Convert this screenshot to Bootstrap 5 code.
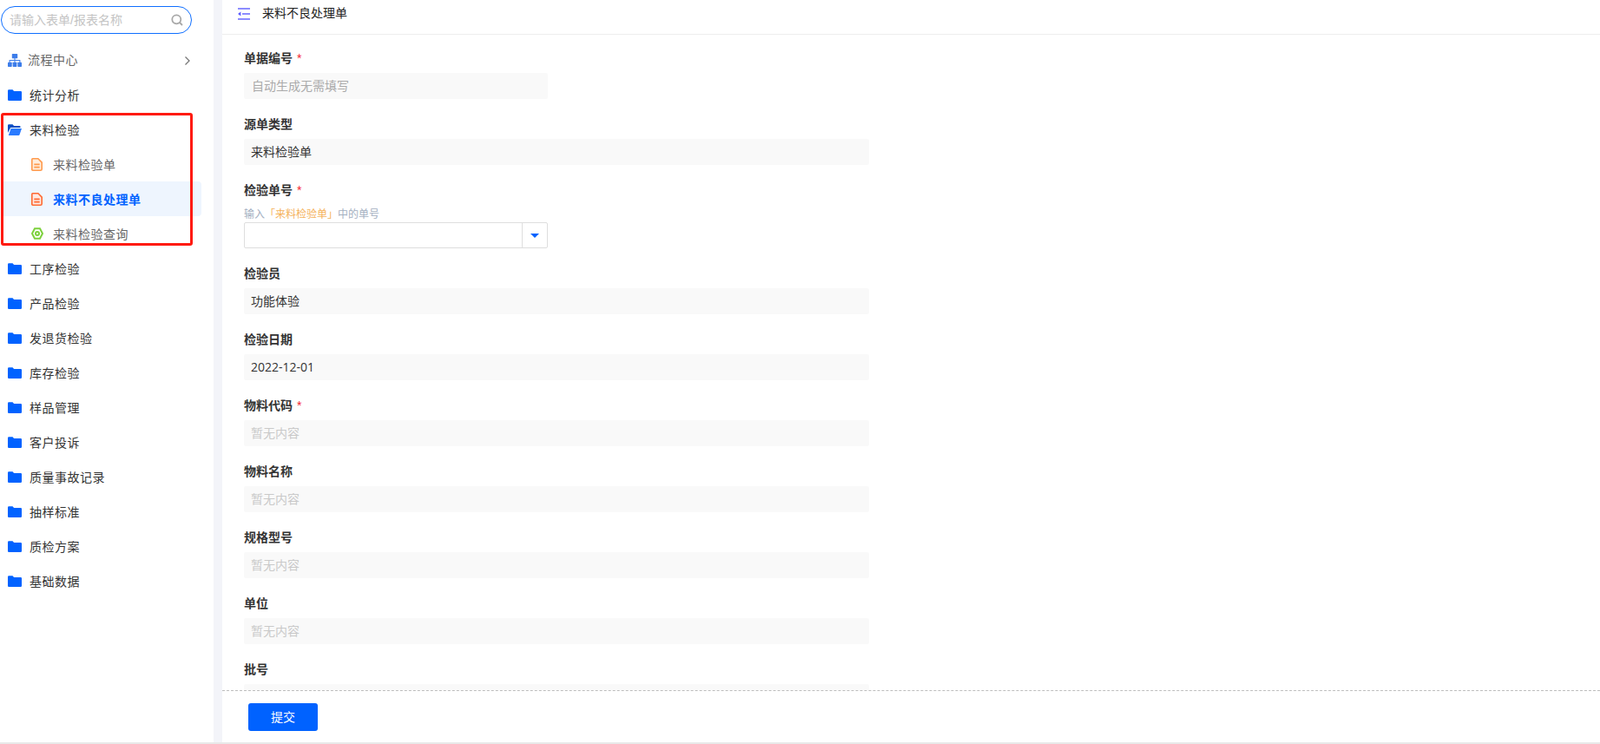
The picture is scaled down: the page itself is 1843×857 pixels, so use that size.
<!DOCTYPE html>
<html lang="zh-CN">

<head>
    <meta charset="UTF-8" />
    <title>来料不良处理单</title>
    <link rel="stylesheet" href="https://cdn.jsdelivr.net/npm/bootstrap@5.3.0/dist/css/bootstrap.min.css">
    <style>
        html, body { height: 100%; overflow: hidden; }
        body { font-family: "Liberation Sans", "Noto Sans CJK SC", sans-serif; font-size: 14px; color: #333; background: #fff; }
        .app-shell { height: 857px; border-bottom: 2px solid #e8e8e8; }
        .side-pane { width: 246px; flex: none; position: relative; }
        .side-gap { width: 10px; flex: none; background: #f3f4f9; }
        .search-box { margin: 7px 0 0 1px; width: 220px; height: 32px; border: 1px solid #0f6fff; border-radius: 16px; padding: 0 9px 0 9px; }
        .search-box span { color: #c4c4c4; font-size: 14px; }
        .menu-wrap { margin-top: 10px; }
        .menu-row { height: 40px; padding-left: 9px; color: #333; }
        .menu-row .row-ico { width: 16px; flex: none; margin-right: 9px; }
        .menu-row .row-text, .sub-row .row-text { padding-top: 2px; letter-spacing: .5px; }
        .menu-first { color: #666; }
        .menu-first .row-ico { margin-right: 7px; }
        .menu-first .row-text { padding-top: 0; }
        .menu-arrow { margin-right: 26px; }
        .sub-row { height: 40px; padding-left: 36px; color: #666; margin-right: 14px; }
        .sub-row .row-ico { width: 15px; flex: none; margin-right: 10px; }
        .sub-active { background: #eef5fe; color: #0062ff; font-weight: 700; border-radius: 0 4px 4px 0; margin-left: 3px; padding-left: 33px; }
        .red-frame { position: absolute; left: 1px; top: 130px; width: 221px; height: 153px; border: 3px solid #ff1a0e; border-radius: 3px; pointer-events: none; }
        .head-bar { height: 40px; border-bottom: 1px solid #eeeeee; padding-left: 18px; flex: none; color: #222; }
        .head-bar svg { margin-right: 14px; margin-top: -8px; }
        .head-bar span { margin-top: -8px; }
        .form-scroll { height: 755px; overflow: hidden; padding: 17px 0 0 25px; flex: none; position: relative; }
        .fld { height: 76px; }
        .fld-label { font-weight: 700; color: #333; line-height: 20px; height: 27px; margin: 0; padding: 0; }
        .fld-label i { color: #f5222d; font-style: normal; font-weight: 400; margin-left: 5px; }
        .fld-value { width: 720px; height: 30px; line-height: 30px; background: #f9f9f9; padding: 0 8px; border-radius: 2px; color: #333; }
        .fld-date { font-family: "Open Sans", "Noto Sans CJK SC", sans-serif; }
        .fld-short { width: 350px; padding-left: 9px; color: #aaa; }
        .fld-empty { color: #c9c9c9; }
        .fld-tall { height: 96px; }
        .fld-hint { font-size: 12px; line-height: 16px; height: 16px; color: #a3afbf; margin-top: 3px; }
        .fld-hint b { font-weight: 400; color: #f5b25a; }
        .pick-box { width: 350px; height: 30px; border: 1px solid #dedede; border-radius: 2px; margin-top: 1px; background: #fff; }
        .pick-box div { width: 29px; border-left: 1px solid #dedede; }
        .pick-arrow { width: 0; height: 0; border-left: 5px solid transparent; border-right: 5px solid transparent; border-top: 5px solid #0062ff; }
        .foot-bar { height: 60px; border-top: 1px dashed #bdbdbd; padding: 14px 0 0 30px; flex: none; }
        .btn-send { width: 80px; height: 32px; background: #0062ff; color: #fff; font-size: 14px; padding: 0; border: 0; border-radius: 3px; }
    </style>
</head>

<body>
    <div class="app-shell d-flex">
        <div class="side-pane">
            <div class="search-box d-flex align-items-center justify-content-between">
                <span>请输入表单/报表名称</span>
                <svg width="14" height="14" viewBox="0 0 14 14" fill="none" stroke="#a8a8a8" stroke-width="1.8"><circle cx="6.3" cy="6.3" r="5" /><path d="M10 10l3 3" /></svg>
            </div>
            <div class="menu-wrap" id="menu"></div>
            <div class="red-frame"></div>
        </div>
        <div class="side-gap"></div>
        <div class="flex-grow-1 d-flex flex-column">
            <div class="head-bar d-flex align-items-center">
                <svg width="14" height="14" viewBox="0 0 14 14" fill="none" stroke="#8c8cff" stroke-width="2"><path d="M0 1h14M5 7h9M0 13h14" /><path d="M3.4 4.6v4.8L0 7z" fill="#5a5aff" stroke="none" /></svg>
                <span>来料不良处理单</span>
            </div>
            <div class="form-scroll" id="form"></div>
            <div class="foot-bar"><button type="button" class="btn btn-send">提交</button></div>
        </div>
    </div>

    <script>
        const folder = `<svg width="16" height="13" viewBox="0 0 16 13"><path d="M0 1.5A1.2 1.2 0 0 1 1.2.3h4.3l1.6 1.6h7.7A1.2 1.2 0 0 1 16 3.1v8.6a1.2 1.2 0 0 1-1.2 1.2H1.2A1.2 1.2 0 0 1 0 11.7z" fill="#0062ff"/></svg>`;
        const folderOpen = `<svg width="16" height="13" viewBox="0 0 16 13"><path d="M0 1.5A1.2 1.2 0 0 1 1.2.3h4.3l1.6 1.6h6.4a1 1 0 0 1 1 1V4H3.2L0 10z" fill="#0a4fc4"/><path d="M3.6 5H16l-2.4 7a1.2 1.2 0 0 1-1.1.9H.8z" fill="#2a7bff"/></svg>`;
        const tree = `<svg width="16" height="15" viewBox="0 0 15 14" fill="#3d7dea"><rect x="4.5" y="0" width="6" height="5" rx=".6"/><rect x="0" y="9" width="4.4" height="5" rx=".6"/><rect x="5.3" y="9" width="4.4" height="5" rx=".6"/><rect x="10.6" y="9" width="4.4" height="5" rx=".6"/><path d="M7 4.5h1V6.5h5.5V9.5h-1V7.5H8V9.5H7V7.5H2.5V9.5h-1V6.5H7z"/></svg>`;
        const chevron = `<svg width="8" height="12" viewBox="0 0 8 12" fill="none" stroke="#777" stroke-width="1.3"><path d="M1.5 1.5L6 6l-4.5 4.5"/></svg>`;
        const doc = (color, tint) => `<svg width="13" height="15" viewBox="0 0 13 15" fill="${tint}" stroke="${color}" stroke-width="1.6"><path d="M1.7.8h6.2l4.3 4.3v7.6a1.5 1.5 0 0 1-1.5 1.5H1.7A1 1 0 0 1 .8 13V1.8A1 1 0 0 1 1.7.8z"/><path d="M3.3 7.4h6.4M3.3 10.6h6.4" fill="none"/></svg>`;
        const hexIcon = `<svg width="14" height="14" viewBox="0 0 14 14" fill="none" stroke="#7dd13d" stroke-width="2"><path d="M4 1.2h6l3 5.8-3 5.8H4L1 7z"/><circle cx="7" cy="7" r="2"/></svg>`;

        const rows = [
            { text: "流程中心", icon: tree, first: true },
            { text: "统计分析", icon: folder },
            { text: "来料检验", icon: folderOpen },
            { text: "来料检验单", icon: doc("#ff9a4d", "#ffeedd"), sub: true },
            { text: "来料不良处理单", icon: doc("#ff6a33", "#ffe9e0"), sub: true, active: true },
            { text: "来料检验查询", icon: hexIcon, sub: true },
            { text: "工序检验", icon: folder },
            { text: "产品检验", icon: folder },
            { text: "发退货检验", icon: folder },
            { text: "库存检验", icon: folder },
            { text: "样品管理", icon: folder },
            { text: "客户投诉", icon: folder },
            { text: "质量事故记录", icon: folder },
            { text: "抽样标准", icon: folder },
            { text: "质检方案", icon: folder },
            { text: "基础数据", icon: folder },
        ];

        document.getElementById("menu").innerHTML = rows.map((r) => {
            let cls = r.sub ? "sub-row" : "menu-row";
            if (r.first) cls += " menu-first";
            if (r.active) cls += " sub-active";
            const arrow = r.first ? `<span class="ms-auto menu-arrow">${chevron}</span>` : "";
            return `<div class="${cls} d-flex align-items-center"><span class="row-ico d-flex align-items-center">${r.icon}</span><span class="row-text">${r.text}</span>${arrow}</div>`;
        }).join("");

        const fields = [
            { label: "单据编号", req: true, value: "自动生成无需填写", short: true },
            { label: "源单类型", value: "来料检验单" },
            { label: "检验单号", req: true, pick: true },
            { label: "检验员", value: "功能体验" },
            { label: "检验日期", value: "2022-12-01", date: true },
            { label: "物料代码", req: true, value: "暂无内容", empty: true },
            { label: "物料名称", value: "暂无内容", empty: true },
            { label: "规格型号", value: "暂无内容", empty: true },
            { label: "单位", value: "暂无内容", empty: true },
            { label: "批号", value: "", empty: true },
        ];

        document.getElementById("form").innerHTML = fields.map((f) => {
            const star = f.req ? "<i>*</i>" : "";
            const label = `<div class="fld-label">${f.label}${star}</div>`;
            if (f.pick)
            {
                return `<div class="fld fld-tall">${label}
                    <div class="fld-hint">输入<b>「来料检验单」</b>中的单号</div>
                    <div class="pick-box d-flex justify-content-end"><div class="d-flex align-items-center justify-content-center"><span class="pick-arrow"></span></div></div>
                </div>`;
            }
            let cls = "fld-value";
            if (f.short) cls += " fld-short";
            if (f.empty) cls += " fld-empty";
            if (f.date) cls += " fld-date";
            return `<div class="fld">${label}<div class="${cls}">${f.value}</div></div>`;
        }).join("");
    </script>
    <script src="https://cdn.jsdelivr.net/npm/bootstrap@5.3.0/dist/js/bootstrap.bundle.min.js"></script>
</body>

</html>
